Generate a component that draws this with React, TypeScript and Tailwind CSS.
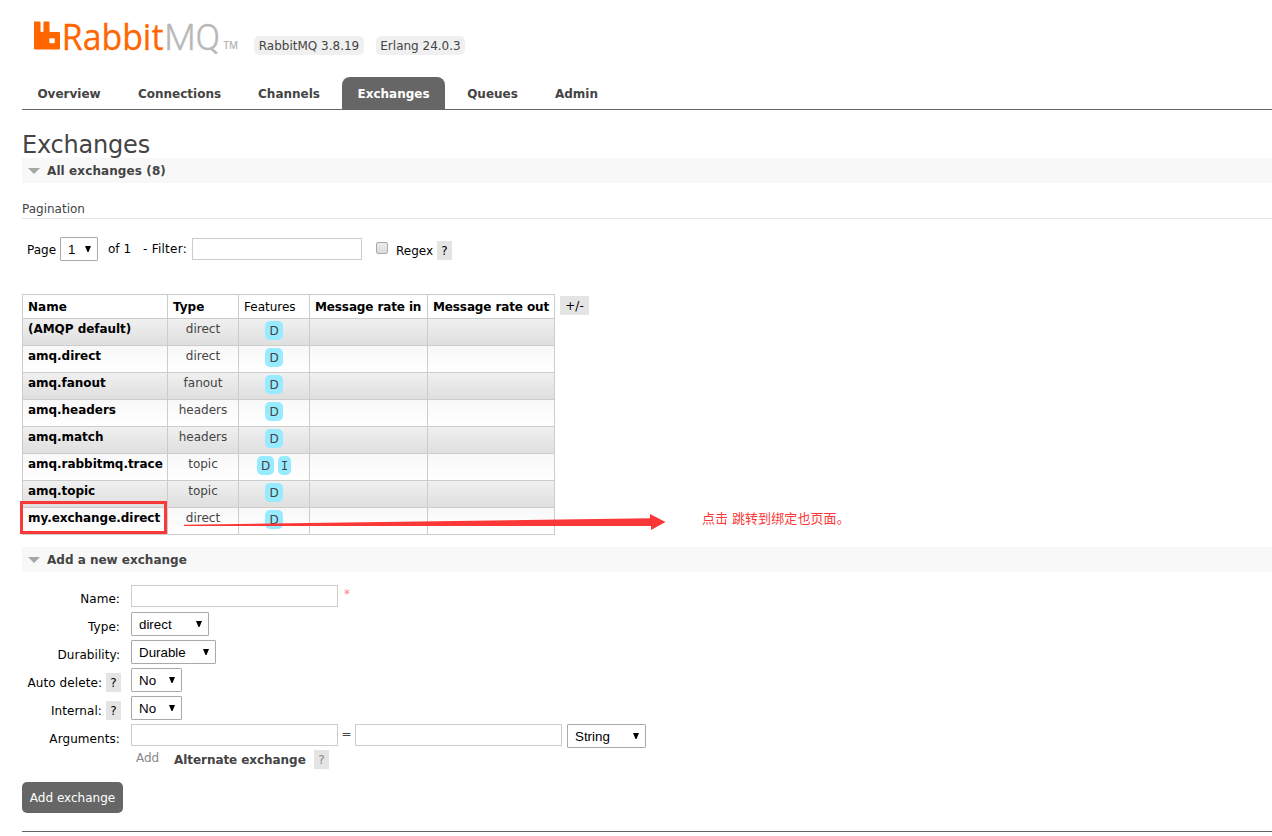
import type { ReactNode } from "react";

const tabs = [
  { label: "Overview", width: "w-[94px]" },
  { label: "Connections", width: "w-[113px]" },
  { label: "Channels", width: "w-[92px]" },
  { label: "Exchanges", width: "w-[103px]" },
  { label: "Queues", width: "w-[81px]" },
  { label: "Admin", width: "w-[73px]" },
];

const exchanges = [
  { name: "(AMQP default)", type: "direct", features: ["D"] },
  { name: "amq.direct", type: "direct", features: ["D"] },
  { name: "amq.fanout", type: "fanout", features: ["D"] },
  { name: "amq.headers", type: "headers", features: ["D"] },
  { name: "amq.match", type: "headers", features: ["D"] },
  { name: "amq.rabbitmq.trace", type: "topic", features: ["D", "I"] },
  { name: "amq.topic", type: "topic", features: ["D"] },
  { name: "my.exchange.direct", type: "direct", features: ["D"] },
];

function Logo() {
  return (
    <svg width="208" height="56" viewBox="0 -10 208 56" className="block shrink-0">
      <path
        d="M2 6.500a1 1 0 0 1 1-1h4.500a1 1 0 0 1 1 1V15a1 1 0 0 0 1 1h1a1 1 0 0 0 1-1V6.500a1 1 0 0 1 1-1h4a1 1 0 0 1 1 1V15a1 1 0 0 0 1 1h8.500a1 1 0 0 1 1 1v15.500a1 1 0 0 1-1 1H3a1 1 0 0 1-1-1zM18.300 22.300a1 1 0 0 0-1 1v3a1 1 0 0 0 1 1h3.500a1 1 0 0 0 1-1v-3a1 1 0 0 0-1-1z"
        fill="#ff6600"
        fillRule="evenodd"
      />
      <text transform="translate(29.800 33.500) scale(0.940 1)" fontSize="36" fill="#ff6600" stroke="#ff6600" strokeWidth="0.300" className="font-['Open_Sans',sans-serif]">
        Rabbit
      </text>
      <text transform="translate(132.200 33.500) scale(0.980 1)" fontSize="37" fill="#b8b8b8" stroke="#b8b8b8" strokeWidth="0.400" className="font-['Roboto',sans-serif] font-light">
        MQ
      </text>
      <text transform="translate(191.500 33)" fontSize="10" fill="#b0b0b0" stroke="#b0b0b0" strokeWidth="0.200" className="font-['Open_Sans',sans-serif]">
        TM
      </text>
    </svg>
  );
}

function Help({ className = "" }: { className?: string }) {
  return (
    <span className={`block h-[19px] w-[15px] shrink-0 bg-[#e4e4e4] text-center leading-[20px] ${className}`}>?</span>
  );
}

function SectionBar({ title, className = "" }: { title: string; className?: string }) {
  return (
    <h2 className={`flex h-[25px] items-center bg-[#f8f8f8] pl-[6px] font-bold text-[#444] ${className}`}>
      <svg width="12" height="6" viewBox="0 0 12 6" className="mr-[7px] mt-px">
        <path d="M0 0h12L6 6z" fill="#a6a6a6" />
      </svg>
      <span>{title}</span>
    </h2>
  );
}

function Select({ value, className }: { value: string; className: string }) {
  return (
    <div
      className={`flex h-6 shrink-0 items-center justify-between rounded-[1px] border border-[#a9a9a9] bg-white pl-[7px] pr-[6px] font-['Liberation_Sans',Arial,sans-serif] text-[13.333px] text-black ${className}`}
    >
      <span className="pt-[2px]">{value}</span>
      <svg width="6" height="6" viewBox="0 0 6 6">
        <path d="M0 0h6L3.500 6h-1z" fill="#000" />
      </svg>
    </div>
  );
}

function TextInput({ className }: { className: string }) {
  return <input type="text" className={`block h-[22px] shrink-0 border border-[#ccc] bg-white ${className}`} />;
}

function FormRow({ label, help, children }: { label: string; help?: boolean; children: ReactNode }) {
  return (
    <div className="flex h-7 items-start">
      <div className="mr-[10px] flex w-[99px] justify-end text-black">
        <span className={`mt-[7px] whitespace-nowrap leading-4 tracking-[0.08px] ${help ? "mr-[4px]" : "mr-px"}`}>{label}</span>
        {help && <Help className="mt-[5px]" />}
      </div>
      {children}
    </div>
  );
}

// Red box, arrow and remark drawn over the page
function Annotation() {
  return (
    <>
      <div className="absolute left-[20px] top-[501px] h-[33px] w-[147px] border-[3px] border-[#fb3838]" />
      <svg width="482" height="20" viewBox="0 0 482 20" className="absolute left-[184px] top-[512px]">
        <path d="M0 12.700L466 6.200V2l15.500 8L467 18v-4L0 14z" fill="#fb3838" />
      </svg>
      <p className="absolute left-[702px] top-[509px] whitespace-nowrap font-['Liberation_Sans','Noto_Sans_CJK_SC',sans-serif] text-[13px] leading-5 tracking-[0.1px] text-[#fb3838]">
        点击 跳转到绑定也页面。
      </p>
    </>
  );
}

export default function App() {
  return (
    <div className="relative h-[836px] w-[1272px] overflow-hidden bg-white pl-[22px] font-['DejaVu_Sans',Verdana,sans-serif] text-[12px] text-[#444]">
      <header className="flex h-[77px] items-start pl-[10px] pt-[6px]">
        <Logo />
        <div className="ml-[14px] mt-[30px] flex gap-3 leading-[20px]">
          <span className="h-[19px] w-[110px] whitespace-nowrap rounded-[5px] bg-[#f0f0f0] text-center">RabbitMQ 3.8.19</span>
          <span className="h-[19px] w-[89px] whitespace-nowrap rounded-[5px] bg-[#f0f0f0] text-center">Erlang 24.0.3</span>
        </div>
      </header>

      <nav className="flex h-[33px] gap-[7px] border-b border-[#666] font-bold">
        {tabs.map(({ label, width }) => (
          <a
            key={label}
            className={`${width} h-8 rounded-t-lg pt-px text-center leading-8 ${label === "Exchanges" ? "bg-[#666] text-white" : "text-[#444]"}`}
          >
            {label}
          </a>
        ))}
      </nav>

      <h1 className="mt-[21px] h-[27px] text-[24px] leading-7 tracking-[-0.2px]">Exchanges</h1>
      <SectionBar title="All exchanges (8)" className="tracking-[0.1px]" />

      <h3 className="mt-[18px] h-[18px] border-b border-[#e4e4e4] leading-4">Pagination</h3>

      <div className="mt-[18px] flex h-[57px] items-start pl-[5px] text-black">
        <span className="mt-[5px] w-[33px] leading-4">Page</span>
        <Select value="1" className="w-[38px]" />
        <span className="ml-[10px] mt-[4px] w-[35px] leading-4">of 1</span>
        <span className="mt-[4px] w-[49px] whitespace-nowrap leading-4 tracking-[0.25px]">- Filter:</span>
        <TextInput className="mt-px w-[170px]" />
        <span className="ml-[14px] mt-[5px] block h-3 w-3 rounded-[2px] border border-[#a9a9a9] bg-gradient-to-b from-[#ececec] to-[#dcdcdc]" />
        <span className="ml-2 mt-[6px] w-[41px] leading-4">Regex</span>
        <Help className="mt-1" />
      </div>

      <div className="flex h-[253px] items-start">
        <table className="w-[533px] table-fixed border-collapse">
          <colgroup>
            <col className="w-[145px]" />
            <col className="w-[71px]" />
            <col className="w-[71px]" />
            <col className="w-[118px]" />
            <col className="w-[127px]" />
          </colgroup>
          <thead>
            <tr className="h-6 whitespace-nowrap text-left leading-4 text-black">
              <th className="border border-[#ccc] px-[5px] py-0">Name</th>
              <th className="border border-[#ccc] px-[5px] py-0">Type</th>
              <th className="border border-[#ccc] px-[5px] py-0 font-normal">Features</th>
              <th className="border border-[#ccc] px-[5px] py-0 tracking-[-0.12px]">Message rate in</th>
              <th className="border border-[#ccc] px-[5px] py-0 tracking-[-0.12px]">Message rate out</th>
            </tr>
          </thead>
          <tbody>
            {exchanges.map(({ name, type, features }, i) => {
              const cell = `border border-[#ccc] px-[5px] pb-0 pt-[2px] align-top bg-clip-padding bg-gradient-to-b ${
                i % 2 === 0 ? "from-[#f0f0f0] to-[#dfdfdf]" : "from-[#f8f8f8] to-white"
              }`;
              return (
                <tr key={name} className="h-[27px] whitespace-nowrap leading-4">
                  <td className={`${cell} font-bold tracking-[-0.04px] text-black`}>{name}</td>
                  <td className={`${cell} text-center`}>{type}</td>
                  <td className={cell}>
                    <div className="flex justify-center gap-1">
                      {features.map((f) => (
                        <span
                          key={f}
                          className={`block h-[19px] rounded-[5px] bg-[#98ebff] text-center leading-[20px] ${
                            f === "I" ? "w-[13px] font-['DejaVu_Sans_Mono',monospace]" : features.length > 1 ? "w-[17px]" : "w-[18px]"
                          }`}
                        >
                          {f}
                        </span>
                      ))}
                    </div>
                  </td>
                  <td className={cell} />
                  <td className={cell} />
                </tr>
              );
            })}
          </tbody>
        </table>
        <span className="ml-[5px] mt-[2px] block h-[19px] w-[29px] bg-[#e4e4e4] text-center leading-[20px] text-black">+/-</span>
      </div>

      <SectionBar title="Add a new exchange" />

      <form className="mt-3">
        <FormRow label="Name:">
          <TextInput className="mt-px w-[207px]" />
          <span className="ml-[6px] mt-[2px] leading-4 text-[#ff8080]">*</span>
        </FormRow>
        <FormRow label="Type:">
          <Select value="direct" className="w-[78px]" />
        </FormRow>
        <FormRow label="Durability:">
          <Select value="Durable" className="w-[85px]" />
        </FormRow>
        <FormRow label="Auto delete:" help>
          <Select value="No" className="w-[51px]" />
        </FormRow>
        <FormRow label="Internal:" help>
          <Select value="No" className="w-[51px]" />
        </FormRow>
        <FormRow label="Arguments:">
          <TextInput className="w-[207px]" />
          <span className="mt-[2px] w-[17px] text-center leading-4">=</span>
          <TextInput className="mr-[5px] w-[207px]" />
          <Select value="String" className="w-[79px]" />
        </FormRow>
        <div className="flex h-[30px] items-start pl-[114px] leading-4">
          <span className="-mt-[2px] w-[38px] text-[#888]">Add</span>
          <span className="w-[140px] whitespace-nowrap font-bold tracking-[-0.06px]">Alternate exchange</span>
          <Help className="-mt-[2px] text-[#888]" />
        </div>
        <button type="button" className="block h-[31px] w-[101px] whitespace-nowrap rounded-[5px] bg-[#666] text-center leading-[32px] text-white">
          Add exchange
        </button>
      </form>

      <footer className="mt-[18px] border-t border-[#666]" />

      <Annotation />
    </div>
  );
}
